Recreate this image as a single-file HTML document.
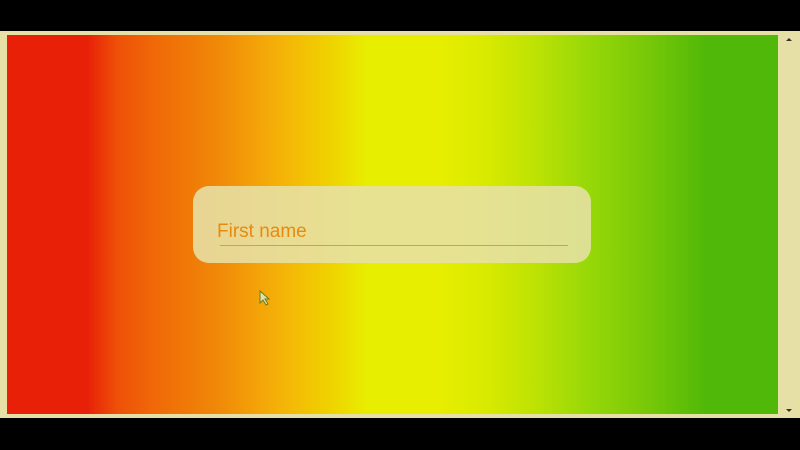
<!DOCTYPE html>
<html><head><style>
html,body{margin:0;padding:0;width:800px;height:450px;overflow:hidden;background:#000;}
.frame{position:absolute;left:0;top:31px;width:800px;height:387px;background:#e6e0a6;}
.content{position:absolute;left:7px;top:35px;width:771px;height:379px;
background:linear-gradient(90deg,#e82008 0px,#e82008 80px,#ee5008 110px,#f06a08 150px,#f08808 210px,#f5b008 270px,#f0d000 320px,#e8ee00 360px,#e8ee00 430px,#d8ea00 480px,#bce204 530px,#98d808 580px,#78c808 640px,#50b808 700px,#50b808 771px);}
.box{position:absolute;left:193px;top:186px;width:398px;height:77px;border-radius:16px;background:rgba(230,224,166,0.88);}
.label{position:absolute;left:217px;top:221px;font:19px "Liberation Sans",sans-serif;color:#e88a10;}
.line{position:absolute;left:220px;top:245px;width:348px;height:1px;background:#b8a860;}
.arrow{position:absolute;left:786px;top:38px;width:0;height:0;border-left:3px solid transparent;border-right:3px solid transparent;border-bottom:3px solid #333;}
.arrow2{position:absolute;left:786px;top:409px;width:0;height:0;border-left:3px solid transparent;border-right:3px solid transparent;border-top:3px solid #333;}
</style></head><body>
<div class="frame"></div>
<div class="content"></div>
<div class="box"></div>
<div class="label">First name</div>
<div class="line"></div>
<div class="arrow"></div>
<div class="arrow2"></div>
<svg style="position:absolute;left:259px;top:290px" width="12" height="16"><path d="M1 1 L1 13 L4 10 L7 15 L9 14 L6 9 L10 9 Z" fill="#e6e0a6" stroke="#6a7a20" stroke-width="1"/></svg>
</body></html>
